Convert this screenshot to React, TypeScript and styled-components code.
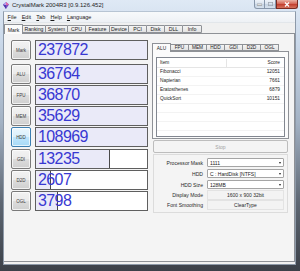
import styled, { createGlobalStyle } from "styled-components";

const GlobalStyle = createGlobalStyle`
  html, body { margin: 0; padding: 0; background: #ffffff; }
  body { font-family: "Liberation Sans", Arial, sans-serif; }
`;

type Score = { label: string; value: number; max?: number; active?: boolean };

const mark: Score = { label: "Mark", value: 237872 };
const cpuScores: Score[] = [
  { label: "ALU", value: 36764 },
  { label: "FPU", value: 36870 },
  { label: "MEM", value: 35629 },
  { label: "HDD", value: 108969, active: true },
];
const gfxScores: Score[] = [
  { label: "GDI", value: 13235, max: 20000 },
  { label: "D2D", value: 2607, max: 20000 },
  { label: "OGL", value: 3798, max: 20000 },
];

const mainTabs = [
  { name: "Mark", w: 19 },
  { name: "Ranking", w: 24 },
  { name: "System", w: 23 },
  { name: "CPU", w: 19 },
  { name: "Feature", w: 25 },
  { name: "Device", w: 20 },
  { name: "PCI", w: 19 },
  { name: "Disk", w: 19 },
  { name: "DLL", w: 19 },
  { name: "Info", w: 20 },
];

const subTabs = ["ALU", "FPU", "MEM", "HDD", "GDI", "D2D", "OGL"];

const aluItems = [
  { item: "Fibonacci", score: 12051 },
  { item: "Napierian", score: 7661 },
  { item: "Eratosthenes", score: 6879 },
  { item: "QuickSort", score: 10151 },
];

const Window = styled.div`
  width: 300px;
  height: 271px;
  box-sizing: border-box;
  display: flex;
  flex-direction: column;
  padding: 0 4px 6px 3px;
  overflow: hidden;
  background: linear-gradient(
    to bottom,
    #dfe9f5 0%,
    #cbd9ea 15%,
    #a3b2c4 45%,
    #5d6672 75%,
    #3b4048 100%
  );
`;

const TitleBar = styled.div`
  height: 11px;
  flex: none;
  display: flex;
  align-items: flex-start;
  margin: 0 -3px 0 0;
`;

const TitleText = styled.span`
  margin: 2px 0 0 3px;
  font-size: 6px;
  line-height: 7px;
  color: #1e1e1e;
  white-space: nowrap;
`;

const Controls = styled.div`
  margin-left: auto;
  margin-right: 1px;
  display: flex;
`;

const CtrlButton = styled.div<{ $close?: boolean; $w: number }>`
  width: ${(p) => p.$w}px;
  height: 9px;
  box-sizing: border-box;
  display: flex;
  align-items: center;
  justify-content: center;
  border: 1px solid ${(p) => (p.$close ? "#7a2c22" : "#8796aa")};
  border-top: none;
  border-left-width: ${(p) => (p.$close ? 1 : 0)}px;
  border-radius: ${(p) => (p.$close ? "0 0 3px 0" : "0")};
  background: ${(p) =>
    p.$close
      ? "linear-gradient(to bottom, #eab1a4 0%, #d66a5a 45%, #c3402f 55%, #d5735e 100%)"
      : "linear-gradient(to bottom, #eef3f9 0%, #dbe4ef 45%, #c6d3e2 55%, #d7e2ee 100%)"};
  &:first-child {
    border-left-width: 1px;
    border-radius: 0 0 0 3px;
  }
`;

const Client = styled.div`
  flex: 1;
  display: flex;
  flex-direction: column;
  background: #f0f0f0;
  border: 1px solid #8d99a8;
  border-top-color: #b7c4d3;
`;

const MenuBar = styled.div`
  height: 10px;
  flex: none;
  display: flex;
  align-items: center;
  padding-left: 1px;
  background: linear-gradient(to bottom, #f7f9fb, #eef1f5);
  border-bottom: 1px solid #e2e6ea;
`;

const MenuItem = styled.span`
  font-size: 5.5px;
  color: #1a1a1a;
  padding: 0 2.6px;
  & u {
    text-decoration: underline;
  }
`;

const TabStrip = styled.div`
  height: 9px;
  flex: none;
  display: flex;
  align-items: flex-end;
  padding: 1px 0 0 1px;
  position: relative;
  z-index: 1;
`;

const Tab = styled.div<{ $w: number; $active?: boolean }>`
  width: ${(p) => p.$w}px;
  height: ${(p) => (p.$active ? 10 : 8)}px;
  box-sizing: border-box;
  display: flex;
  align-items: center;
  justify-content: center;
  font-size: 5.2px;
  color: #222;
  border: 1px solid #8e9196;
  border-bottom: ${(p) => (p.$active ? "none" : "1px solid #8e9196")};
  margin-left: -1px;
  margin-bottom: ${(p) => (p.$active ? -1 : 0)}px;
  background: ${(p) =>
    p.$active ? "#fbfbfb" : "linear-gradient(to bottom, #f4f4f4, #e3e3e3)"};
  border-radius: 1px 1px 0 0;
  white-space: nowrap;
`;

const Panel = styled.div`
  flex: 1;
  display: flex;
  gap: 4px;
  padding: 6px 0 0 7px;
  margin: 0 0 2px 0;
  background: #f4f4f4;
  border: 1px solid #8e9196;
  border-left: none;
`;

const LeftCol = styled.div`
  width: 137px;
  display: flex;
  flex-direction: column;
`;

const Group = styled.div<{ $top: number }>`
  display: flex;
  flex-direction: column;
  gap: 1px;
  margin-top: ${(p) => p.$top}px;
`;

const ScoreRow = styled.div`
  display: flex;
  gap: 4px;
  height: 20px;
`;

const BenchButton = styled.div<{ $active?: boolean }>`
  width: 20px;
  height: 20px;
  box-sizing: border-box;
  display: flex;
  align-items: center;
  justify-content: center;
  font-size: 4.5px;
  color: #3a3a3a;
  border: 1px solid ${(p) => (p.$active ? "#3c7fb1" : "#7a7a7a")};
  border-radius: 2px;
  background: ${(p) =>
    p.$active
      ? "linear-gradient(to bottom, #eaf6fd 0%, #d9f0fc 50%, #bee6fd 50%, #a7d9f5 100%)"
      : "linear-gradient(to bottom, #f2f2f2 0%, #ebebeb 50%, #dddddd 50%, #cfcfcf 100%)"};
  box-shadow: inset 0 0 0 1px rgba(255, 255, 255, 0.7);
`;

const ScoreBox = styled.div`
  position: relative;
  width: 113px;
  height: 20px;
  box-sizing: border-box;
  border: 1px solid #5f5f5f;
  background: #ffffff;
  overflow: hidden;
`;

const Gauge = styled.div<{ $full: boolean }>`
  position: absolute;
  left: 0;
  top: 0;
  bottom: 0;
  background: #eaeaf8;
  border-right: ${(p) => (p.$full ? "none" : "1px solid #4a4a4a")};
`;

const ScoreValue = styled.span`
  position: relative;
  display: block;
  padding-left: 2px;
  font-size: 16px;
  line-height: 18px;
  letter-spacing: -0.6px;
  color: #3838d2;
`;

const RightCol = styled.div`
  width: 137px;
  display: flex;
  flex-direction: column;
  padding-top: 3px;
`;

const SubTabStrip = styled.div`
  display: flex;
  align-items: flex-end;
  height: 8px;
  padding-left: 1px;
  position: relative;
  z-index: 1;
`;

const SubTab = styled.div<{ $active?: boolean }>`
  width: 19px;
  height: ${(p) => (p.$active ? 9 : 7)}px;
  box-sizing: border-box;
  display: flex;
  align-items: center;
  justify-content: center;
  font-size: 4.8px;
  color: #222;
  border: 1px solid #8e9196;
  border-bottom: ${(p) => (p.$active ? "none" : "1px solid #8e9196")};
  margin-left: -1px;
  margin-bottom: ${(p) => (p.$active ? -1 : 0)}px;
  background: ${(p) =>
    p.$active ? "#fbfbfb" : "linear-gradient(to bottom, #f4f4f4, #e3e3e3)"};
`;

const SubPanel = styled.div`
  height: 88px;
  box-sizing: border-box;
  padding: 5px 3px 2px 3px;
  background: #fbfbfb;
  border: 1px solid #8e9196;
`;

const List = styled.div`
  height: 80px;
  box-sizing: border-box;
  border: 1px solid #828790;
  background: #ffffff;
  overflow: hidden;
  display: flex;
  flex-direction: column;
`;

const ListRow = styled.div<{ $header?: boolean }>`
  display: grid;
  grid-template-columns: 70px 1fr;
  height: ${(p) => (p.$header ? 10 : 9)}px;
  flex: none;
  box-sizing: border-box;
  align-items: center;
  font-size: 4.8px;
  color: #1e1e1e;
  border-bottom: 1px solid ${(p) => (p.$header ? "#e5e5e5" : "#f3f3f3")};
  background: #ffffff;
`;

const Cell = styled.span<{ $right?: boolean; $divider?: boolean }>`
  padding: 0 4px 0 3px;
  text-align: ${(p) => (p.$right ? "right" : "left")};
  border-right: ${(p) => (p.$divider ? "1px solid #e5e5e5" : "none")};
  line-height: 8px;
`;

const StopButton = styled.div`
  margin: 1px 1px 0 1px;
  height: 13px;
  box-sizing: border-box;
  display: flex;
  align-items: center;
  justify-content: center;
  font-size: 5px;
  color: #a3a3a3;
  border: 1px solid #bdbdbd;
  border-radius: 2px;
  background: #f4f4f4;
`;

const Settings = styled.div`
  margin: 1px 1px 0 1px;
  height: 59px;
  box-sizing: border-box;
  padding-top: 3px;
  border: 1px solid #dcdcdc;
  display: flex;
  flex-direction: column;
  gap: 2px;
`;

const SettingRow = styled.div<{ $tight?: boolean }>`
  display: flex;
  align-items: center;
  gap: 4px;
  height: 9px;
  margin-top: ${(p) => (p.$tight ? -1 : 0)}px;
`;

const Label = styled.span`
  width: 49px;
  text-align: right;
  font-size: 5.1px;
  color: #2a2a2a;
  white-space: nowrap;
`;

const Combo = styled.div`
  width: 77px;
  height: 9px;
  box-sizing: border-box;
  display: flex;
  align-items: center;
  justify-content: space-between;
  padding: 0 2px;
  font-size: 5px;
  color: #1a1a1a;
  background: #ffffff;
  border: 1px solid #a5a5a5;
  border-radius: 1px;
`;

const Arrow = styled.span`
  width: 0;
  height: 0;
  border-left: 1.5px solid transparent;
  border-right: 1.5px solid transparent;
  border-top: 2px solid #222;
`;

const StaticValue = styled.div`
  width: 77px;
  height: 10px;
  box-sizing: border-box;
  display: flex;
  align-items: center;
  justify-content: center;
  font-size: 5px;
  color: #2a2a2a;
  background: #f3f3f3;
  border: 1px solid #e3e3e3;
`;

const CrystalIcon = () => (
  <svg width="6" height="7" viewBox="0 0 6 7" style={{ marginTop: 2, flex: "none" }}>
    <polygon points="3,0 6,2.5 3,7 0,2.5" fill="#7a4fc4" />
    <polygon points="3,0 6,2.5 3,3.2" fill="#e86aa8" />
    <polygon points="3,0 0,2.5 3,3.2" fill="#b9a0ef" />
    <polygon points="0,2.5 3,3.2 3,7" fill="#4a3aa8" />
  </svg>
);

const ScoreLine = ({ s }: { s: Score }) => {
  const pct = s.max ? Math.min(1, s.value / s.max) : 1;
  return (
    <ScoreRow>
      <BenchButton $active={s.active}>{s.label}</BenchButton>
      <ScoreBox>
        <Gauge $full={pct >= 1} style={{ width: `${pct * 100}%` }} />
        <ScoreValue>{s.value}</ScoreValue>
      </ScoreBox>
    </ScoreRow>
  );
};

export default function App() {
  const blankRows = Array.from({ length: 4 }, (_, i) => i);
  return (
    <>
      <GlobalStyle />
      <Window>
        <TitleBar>
          <CrystalIcon />
          <TitleText>CrystalMark 2004R3 [0.9.126.452]</TitleText>
          <Controls>
            <CtrlButton $w={11}>
              <svg width="5" height="3" viewBox="0 0 5 3">
                <rect x="0" y="1" width="5" height="1.5" fill="#ffffff" stroke="#555" strokeWidth="0.4" />
              </svg>
            </CtrlButton>
            <CtrlButton $w={11}>
              <svg width="5" height="4" viewBox="0 0 5 4">
                <rect x="0.3" y="0.3" width="4.4" height="3.4" fill="none" stroke="#9aa3ad" strokeWidth="0.8" />
              </svg>
            </CtrlButton>
            <CtrlButton $w={22} $close>
              <svg width="6" height="5" viewBox="0 0 6 5">
                <path d="M1 0.5 L5 4.5 M5 0.5 L1 4.5" stroke="#ffffff" strokeWidth="1.2" />
              </svg>
            </CtrlButton>
          </Controls>
        </TitleBar>
        <Client>
          <MenuBar>
            <MenuItem><u>F</u>ile</MenuItem>
            <MenuItem><u>E</u>dit</MenuItem>
            <MenuItem><u>T</u>ab</MenuItem>
            <MenuItem><u>H</u>elp</MenuItem>
            <MenuItem><u>L</u>anguage</MenuItem>
          </MenuBar>
          <TabStrip>
            {mainTabs.map((t, i) => (
              <Tab key={t.name} $w={t.w} $active={i === 0}>
                {t.name}
              </Tab>
            ))}
          </TabStrip>
          <Panel>
            <LeftCol>
              <ScoreLine s={mark} />
              <Group $top={4}>
                {cpuScores.map((s) => (
                  <ScoreLine key={s.label} s={s} />
                ))}
              </Group>
              <Group $top={2}>
                {gfxScores.map((s) => (
                  <ScoreLine key={s.label} s={s} />
                ))}
              </Group>
            </LeftCol>
            <RightCol>
              <SubTabStrip>
                {subTabs.map((t, i) => (
                  <SubTab key={t} $active={i === 0}>
                    {t}
                  </SubTab>
                ))}
              </SubTabStrip>
              <SubPanel>
                <List>
                  <ListRow $header>
                    <Cell $divider>Item</Cell>
                    <Cell $right>Score</Cell>
                  </ListRow>
                  {aluItems.map((r) => (
                    <ListRow key={r.item}>
                      <Cell>{r.item}</Cell>
                      <Cell $right>{r.score}</Cell>
                    </ListRow>
                  ))}
                  {blankRows.map((i) => (
                    <ListRow key={`blank-${i}`}>
                      <Cell $divider />
                      <Cell />
                    </ListRow>
                  ))}
                </List>
              </SubPanel>
              <StopButton>Stop</StopButton>
              <Settings>
                <SettingRow>
                  <Label>Processor Mask</Label>
                  <Combo>
                    1111
                    <Arrow />
                  </Combo>
                </SettingRow>
                <SettingRow>
                  <Label>HDD</Label>
                  <Combo>
                    C : HardDisk [NTFS]
                    <Arrow />
                  </Combo>
                </SettingRow>
                <SettingRow>
                  <Label>HDD Size</Label>
                  <Combo>
                    128MB
                    <Arrow />
                  </Combo>
                </SettingRow>
                <SettingRow $tight>
                  <Label>Display Mode</Label>
                  <StaticValue>1600 x 900 32bit</StaticValue>
                </SettingRow>
                <SettingRow $tight>
                  <Label>Font Smoothing</Label>
                  <StaticValue>ClearType</StaticValue>
                </SettingRow>
              </Settings>
            </RightCol>
          </Panel>
        </Client>
      </Window>
    </>
  );
}
